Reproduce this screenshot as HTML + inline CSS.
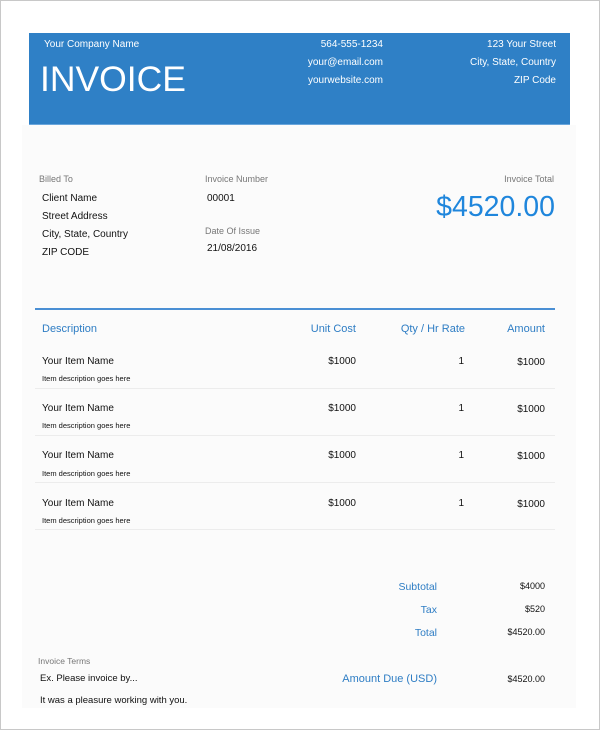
<!DOCTYPE html>
<html><head><meta charset="utf-8"><style>
*{margin:0;padding:0;box-sizing:border-box}
body{width:600px;height:730px;position:relative;background:#fff;font-family:"Liberation Sans",Arial,sans-serif;overflow:hidden}
.frame{position:absolute;left:0;top:0;width:600px;height:730px;border:1px solid #c8c8c8}
.panel{position:absolute;left:22px;top:125px;width:554px;height:583px;background:#fbfbfb}
.hdr{position:absolute;left:29px;top:33px;width:541px;height:92px;background:#2f80c6;border-bottom:1px solid #6aa6dc}
.t{position:absolute;white-space:nowrap;line-height:14px}
.w{color:#fff;font-size:10px}
.g{color:#777;font-size:9px}
.k{color:#111;font-size:10px}
.s{color:#111;font-size:7.5px}
.b{color:#2e7dc4;font-size:11px}
.r{text-align:right}
.line{position:absolute;left:35px;width:520px;height:1px;background:#ececec}
</style></head><body>
<div class="frame"></div>
<div class="panel"></div>
<div class="hdr"></div>
<div class="t w" style="left:44px;top:38px">Your Company Name</div>
<div class="t" style="left:40px;top:59px;font-size:35.5px;line-height:40px;color:#fff">INVOICE</div>
<div class="t w r" style="right:217px;top:38px">564-555-1234</div>
<div class="t w r" style="right:217px;top:56px">your@email.com</div>
<div class="t w r" style="right:217px;top:74px">yourwebsite.com</div>
<div class="t w r" style="right:44px;top:38px">123 Your Street</div>
<div class="t w r" style="right:44px;top:56px">City, State, Country</div>
<div class="t w r" style="right:44px;top:74px">ZIP Code</div>

<div class="t g" style="left:39px;top:172px">Billed To</div>
<div class="t k" style="left:42px;top:192px">Client Name</div>
<div class="t k" style="left:42px;top:210px">Street Address</div>
<div class="t k" style="left:42px;top:228px">City, State, Country</div>
<div class="t k" style="left:42px;top:246px">ZIP CODE</div>
<div class="t g" style="left:205px;top:172px">Invoice Number</div>
<div class="t k" style="left:207px;top:192px">00001</div>
<div class="t g" style="left:205px;top:224px">Date Of Issue</div>
<div class="t k" style="left:207px;top:242px">21/08/2016</div>
<div class="t g r" style="right:46px;top:172px">Invoice Total</div>
<div class="t r" style="right:45px;top:189px;font-size:28.5px;line-height:36px;color:#1f86dc">$4520.00</div>

<div style="position:absolute;left:35px;top:308px;width:520px;height:2px;background:#4a8fd4"></div>
<div class="t b" style="left:42px;top:322px">Description</div>
<div class="t b r" style="right:244px;top:322px">Unit Cost</div>
<div class="t b r" style="right:135px;top:322px">Qty / Hr Rate</div>
<div class="t b r" style="right:55px;top:322px">Amount</div>

<div class="t k" style="left:42px;top:355px">Your Item Name</div><div class="t s" style="left:42px;top:372px">Item description goes here</div>
<div class="t k r" style="right:244px;top:355px">$1000</div><div class="t k r" style="right:136px;top:355px">1</div><div class="t k r" style="right:55px;top:356px">$1000</div>
<div class="line" style="top:388px"></div>
<div class="t k" style="left:42px;top:402px">Your Item Name</div><div class="t s" style="left:42px;top:419px">Item description goes here</div>
<div class="t k r" style="right:244px;top:402px">$1000</div><div class="t k r" style="right:136px;top:402px">1</div><div class="t k r" style="right:55px;top:403px">$1000</div>
<div class="line" style="top:435px"></div>
<div class="t k" style="left:42px;top:449px">Your Item Name</div><div class="t s" style="left:42px;top:467px">Item description goes here</div>
<div class="t k r" style="right:244px;top:449px">$1000</div><div class="t k r" style="right:136px;top:449px">1</div><div class="t k r" style="right:55px;top:450px">$1000</div>
<div class="line" style="top:482px"></div>
<div class="t k" style="left:42px;top:497px">Your Item Name</div><div class="t s" style="left:42px;top:514px">Item description goes here</div>
<div class="t k r" style="right:244px;top:497px">$1000</div><div class="t k r" style="right:136px;top:497px">1</div><div class="t k r" style="right:55px;top:498px">$1000</div>
<div class="line" style="top:529px"></div>

<div class="t b r" style="right:163px;top:580px;font-size:10.5px">Subtotal</div>
<div class="t k r" style="right:55px;top:579px;font-size:9px">$4000</div>
<div class="t b r" style="right:163px;top:603px;font-size:10.5px">Tax</div>
<div class="t k r" style="right:55px;top:602px;font-size:9px">$520</div>
<div class="t b r" style="right:163px;top:626px;font-size:10.5px">Total</div>
<div class="t k r" style="right:55px;top:625px;font-size:9px">$4520.00</div>
<div class="t g" style="left:38px;top:654px;font-size:8.5px">Invoice Terms</div>
<div class="t k" style="left:40px;top:672px;font-size:9.5px">Ex. Please invoice by...</div>
<div class="t b r" style="right:163px;top:672px">Amount Due (USD)</div>
<div class="t k r" style="right:55px;top:672px;font-size:9px">$4520.00</div>
<div class="t k" style="left:40px;top:694px;font-size:9.5px">It was a pleasure working with you.</div>
</body></html>
